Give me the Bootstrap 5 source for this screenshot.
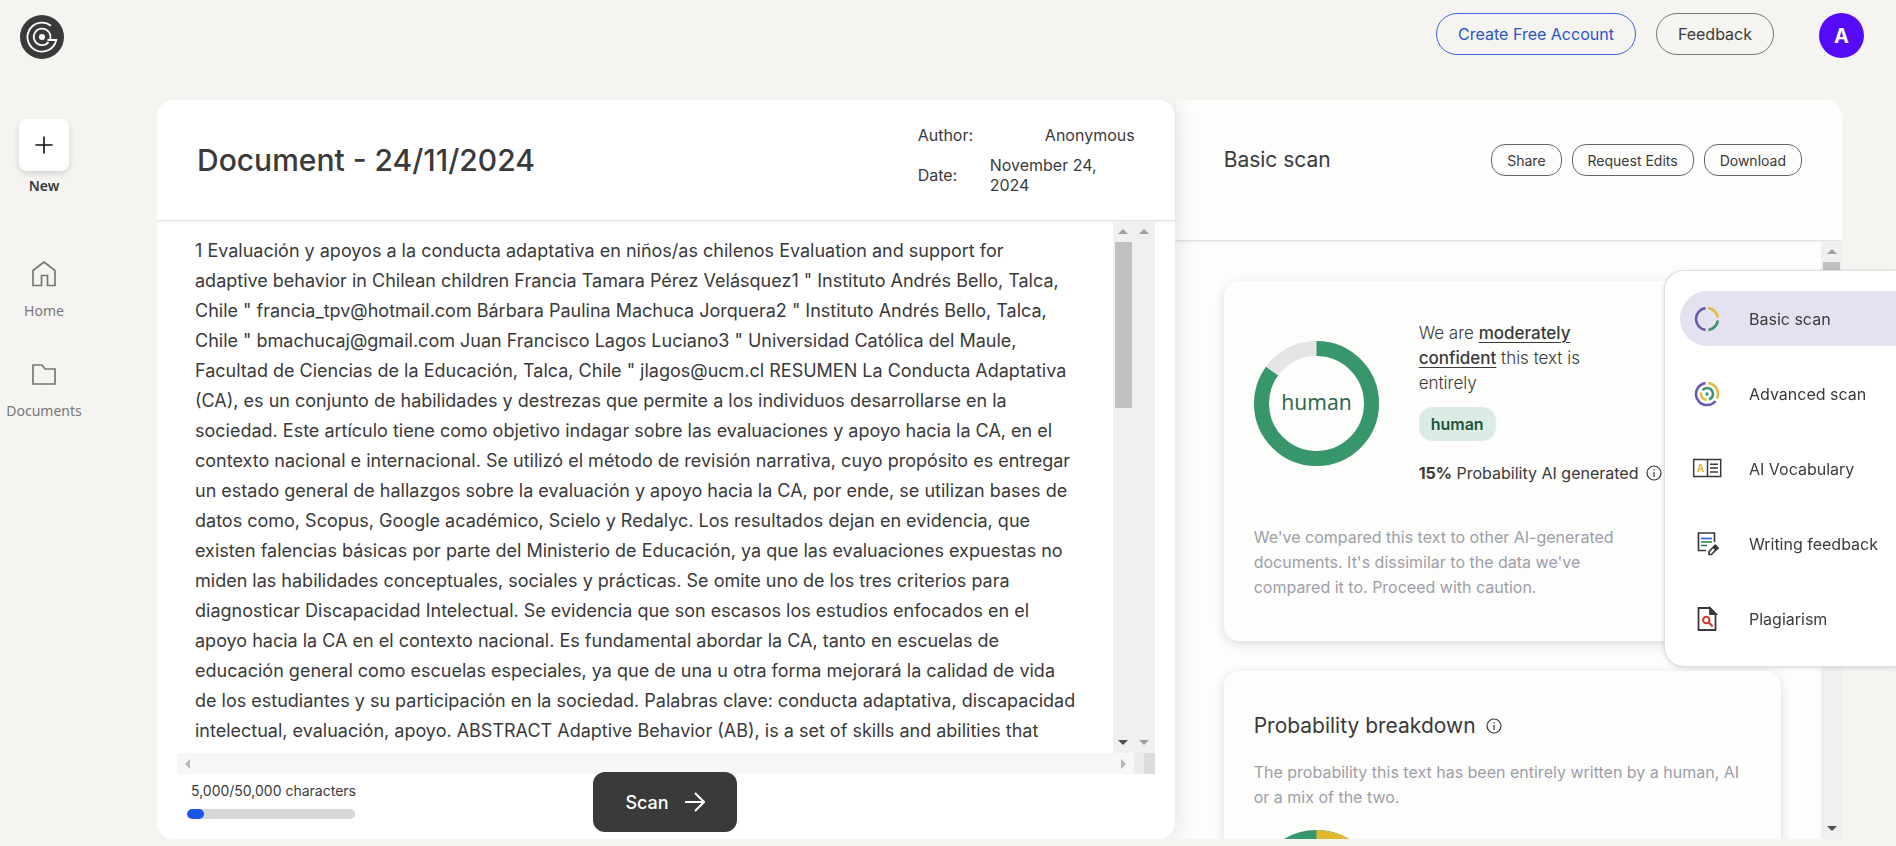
<!DOCTYPE html>
<html lang="en">
<head>
<meta charset="utf-8">
<meta name="viewport" content="width=device-width, initial-scale=1">
<title>Document scan</title>
<link href="https://cdn.jsdelivr.net/npm/bootstrap@5.3.0/dist/css/bootstrap.min.css" rel="stylesheet">
<style>
  :root { --ink: #3a3a3a; --paper: #fdfdfb; --page: #f5f4f1; --green: #38966b; --mute: #9d9da9; }
  body { background: var(--page); color: var(--ink); font-family: Inter, "Liberation Sans", sans-serif; font-size: 16px; height: 100vh; overflow: hidden; }
  svg { display: block; flex: none; }

  .topbar { height: 100px; padding: 13px 32px 0 20px; }
  .topbar .btn { height: 42px; border-radius: 21px; padding: 0 21px; font-size: 16px; border-color: #777; color: var(--ink); }
  .topbar .btn-account { border-color: #3e68d8; color: #2a56c6; }
  .avatar { width: 45px; height: 45px; margin-left: 21px; background: #560bf8; color: #fff; font-size: 20px; font-weight: 700; }

  .side { width: 88px; margin-right: 69px; padding-top: 19px; font-family: "Noto Sans", sans-serif; font-size: 14px; line-height: 20px; }
  .side a { color: #777; text-decoration: none; }
  .side .new-link { color: var(--ink); font-weight: 600; }
  .new-tile { width: 50px; height: 52px; border-radius: 8px; background: #fff; box-shadow: 0 3px 6px #0002; margin-bottom: 5px; }
  .side .nav-gap { margin-top: 65px; gap: 14px; }
  .side .nav-gap-sm { margin-top: 42px; gap: 14px; }

  .workspace { margin: 0 54px 7px 0; background: var(--paper); border-radius: 16px 16px 0 0; overflow: hidden; }
  .doc-pane { flex: 61 1 0; background: #fff; border-radius: 16px; box-shadow: 0 0 24px #0002; z-index: 1; min-width: 0; }
  .scan-pane { flex: 40 1 0; min-width: 0; }
  .doc-head { height: 121px; padding: 0 40px; border-bottom: 1px solid #e2e2e2; box-shadow: 0 1px 3px #0001; flex: none; }
  .doc-head h1 { font-size: 30px; font-weight: 500; }
  .meta { width: 217px; font-size: 16px; line-height: 20px; }
  .meta .when { width: 145px; }
  .doc-scroll { margin: 0 20px; }
  .doc-text { padding: 15px 0 0 18px; font-size: 18px; line-height: 30px; white-space: nowrap; overflow: hidden; }

  .vbar { width: 21px; background: #f0f0f0; padding: 8px 2px; flex: none; }
  .hbar { height: 21px; background: #f7f7f7; flex: none; padding: 0 0 0 8px; }
  .hbar .corner-box { width: 21px; background: linear-gradient(90deg, #ececec 50%, #dcdcdc 50%); }
  .arrow { width: 0; height: 0; border: 5px solid transparent; }
  .arrow-up { border-top: 0; border-bottom-color: #a0a0a0; }
  .arrow-down { border-bottom: 0; border-top-color: #a0a0a0; }
  .arrow-left { border-left: 0; border-right-color: #b8b8b8; }
  .arrow-right { border-right: 0; border-left-color: #b8b8b8; }
  .arrow-dark { border-top-color: #505050; }
  .thumb { width: 17px; background: #c1c1c1; margin-top: 8px; }

  .doc-foot { height: 65px; flex: none; padding: 0 30px; }
  .quota { width: 168px; font-size: 14px; line-height: 18px; }
  .quota label { padding-left: 4px; white-space: nowrap; }
  .quota .progress { height: 10px; background: #d7d8da; border-radius: 5px; margin-top: 9px; }
  .quota .progress-bar { background: #1c55e8; border-radius: 5px; }
  .btn-scan, .btn-scan:hover { width: 144px; height: 60px; border-radius: 12px; background: var(--ink); color: #fff; font-size: 18px; font-weight: 500; margin: -2px auto 0 238px; }

  .scan-head { height: 141px; padding: 0 40px 20px 49px; border-bottom: 1px solid #e2e2e2; box-shadow: 0 1px 3px #0001; flex: none; }
  .scan-head h2, .panel h2 { font-size: 21px; font-weight: 400; line-height: 28px; margin: 0; }
  .scan-head .btn { height: 32px; border-radius: 14px; padding: 0 15px; font-size: 14px; border-color: #666; color: var(--ink); }
  .scan-list { padding: 40px 40px 0 49px; gap: 30px; overflow: hidden; }
  .panel { background: #fdfdfb; border-radius: 15px; box-shadow: 0 3px 12px #0002; padding: 30px; flex: none; }
  .panel-result { height: 360px; }
  .panel .note { color: var(--mute); font-size: 16px; line-height: 25px; margin: 0; }
  .verdict { font-size: 17px; line-height: 25px; font-weight: 300; padding-top: 10px; }
  .verdict strong { font-weight: 500; text-decoration: underline; text-underline-offset: 3px; }
  .tag { background: #dbece4; color: #1f5340; border-radius: 14px; height: 34px; padding: 0 12px; font-size: 16px; font-weight: 600; margin-top: 11px; }
  .donut-word { font-family: "Noto Sans", sans-serif; font-size: 21px; fill: #2d6a50; }
  .chance { font-size: 16px; line-height: 20px; white-space: nowrap; margin-top: 22px; }

  .tools { position: fixed; right: 0; top: 270px; width: 232px; height: 397px; background: #fff; border: 1px solid #dfdfe4; border-right: 0; border-radius: 20px 0 0 20px; box-shadow: 0 1px 4px #0002; padding: 20px 0 0 15px; gap: 20px; z-index: 2; }
  .tools a { height: 55px; border-radius: 28px 0 0 28px; padding-left: 12px; gap: 27px; color: var(--ink); text-decoration: none; font-size: 16px; white-space: nowrap; }
  .tools a.active { background: #e4e1f0; }
  .tools svg { overflow: visible; }
</style>
</head>
<body class="d-flex flex-column">
  <header class="topbar d-flex align-items-start flex-shrink-0">
    <a href="#" aria-label="Home page" class="me-auto" style="padding-top:2px">
      <svg width="44" height="44" viewBox="0 0 44 44" fill="none" stroke="#fff" stroke-width="1.800">
        <circle cx="22" cy="22" r="22" fill="#3a3a3a" stroke="none"/>
        <path d="M31 10.800A14.500 14.500 0 1 0 36.200 25H27.500"/>
        <path d="M28.500 27.200A8.300 8.300 0 1 1 30 24.500"/>
        <circle cx="22" cy="22" r="3" fill="#fff" stroke="none"/>
      </svg>
    </a>
    <div class="d-flex align-items-start">
      <button class="btn btn-account me-3" type="button">Create Free Account</button>
      <button class="btn ms-1 me-4" type="button">Feedback</button>
      <button class="avatar border-0 rounded-circle p-0" type="button">A</button>
    </div>
  </header>

  <div class="d-flex flex-fill" style="min-height:0">
    <nav class="side d-flex flex-column align-items-center flex-shrink-0">
      <a href="#" class="new-link d-flex flex-column align-items-center">
        <span class="new-tile d-flex align-items-center justify-content-center">
          <svg width="18" height="18" viewBox="0 0 18 18" stroke="#111" stroke-width="1.600"><path d="M9 .5v17M.5 9h17"/></svg>
        </span>New
      </a>
      <a href="#" class="nav-gap d-flex flex-column align-items-center">
        <svg width="24" height="26" viewBox="0 0 24 26" fill="none" stroke="#777" stroke-width="1.700"><path d="M1 24.500V9.500L12 1l11 8.500v15h-7.500v-10h-6v10z"/></svg>Home
      </a>
      <a href="#" class="nav-gap-sm d-flex flex-column align-items-center">
        <svg width="24" height="24" viewBox="0 0 24 24" fill="none" stroke="#777" stroke-width="1.700"><path d="M1 21V2h9l3 4h10v15z"/></svg>Documents
      </a>
    </nav>

    <main class="workspace d-flex flex-fill" style="min-width:0">
      <section class="doc-pane d-flex flex-column">
        <div class="doc-head d-flex align-items-center justify-content-between">
          <h1 class="m-0">Document - 24/11/2024</h1>
          <div class="meta d-flex flex-column" style="gap:10px">
            <div class="d-flex justify-content-between"><span>Author:</span><span>Anonymous</span></div>
            <div class="d-flex justify-content-between align-items-center"><span>Date:</span><span class="when">November 24,<br>2024</span></div>
          </div>
        </div>
        <div class="doc-scroll d-flex flex-fill" style="min-height:0">
          <div class="doc-text flex-fill">1 Evaluación y apoyos a la conducta adaptativa en niños/as chilenos Evaluation and support for<br>adaptive behavior in Chilean children Francia Tamara Pérez Velásquez1 " Instituto Andrés Bello, Talca,<br>Chile " francia_tpv@hotmail.com Bárbara Paulina Machuca Jorquera2 " Instituto Andrés Bello, Talca,<br>Chile " bmachucaj@gmail.com Juan Francisco Lagos Luciano3 " Universidad Católica del Maule,<br>Facultad de Ciencias de la Educación, Talca, Chile " jlagos@ucm.cl RESUMEN La Conducta Adaptativa<br>(CA), es un conjunto de habilidades y destrezas que permite a los individuos desarrollarse en la<br>sociedad. Este artículo tiene como objetivo indagar sobre las evaluaciones y apoyo hacia la CA, en el<br>contexto nacional e internacional. Se utilizó el método de revisión narrativa, cuyo propósito es entregar<br>un estado general de hallazgos sobre la evaluación y apoyo hacia la CA, por ende, se utilizan bases de<br>datos como, Scopus, Google académico, Scielo y Redalyc. Los resultados dejan en evidencia, que<br>existen falencias básicas por parte del Ministerio de Educación, ya que las evaluaciones expuestas no<br>miden las habilidades conceptuales, sociales y prácticas. Se omite uno de los tres criterios para<br>diagnosticar Discapacidad Intelectual. Se evidencia que son escasos los estudios enfocados en el<br>apoyo hacia la CA en el contexto nacional. Es fundamental abordar la CA, tanto en escuelas de<br>educación general como escuelas especiales, ya que de una u otra forma mejorará la calidad de vida<br>de los estudiantes y su participación en la sociedad. Palabras clave: conducta adaptativa, discapacidad<br>intelectual, evaluación, apoyo. ABSTRACT Adaptive Behavior (AB), is a set of skills and abilities that</div>
          <div class="vbar d-flex flex-column align-items-center"><span class="arrow arrow-up"></span><span class="thumb" style="height:166px"></span><span class="arrow arrow-down arrow-dark mt-auto"></span></div>
          <div class="vbar d-flex flex-column align-items-center justify-content-between"><span class="arrow arrow-up"></span><span class="arrow arrow-down"></span></div>
        </div>
        <div class="doc-scroll hbar d-flex align-items-center justify-content-between">
          <span class="arrow arrow-left me-auto"></span><span class="arrow arrow-right me-2"></span><span class="corner-box align-self-stretch"></span>
        </div>
        <div class="doc-foot d-flex align-items-start">
          <div class="quota pt-2"><label for="quota">5,000/50,000 characters</label>
            <div class="progress" id="quota" role="progressbar" aria-valuenow="10" aria-valuemin="0" aria-valuemax="100"><div class="progress-bar" style="width:10%"></div></div>
          </div>
          <button class="btn btn-scan d-flex align-items-center justify-content-center gap-3" type="button">Scan
            <svg width="20" height="20" viewBox="0 0 20 20" fill="none" stroke="#fff" stroke-width="2"><path d="M0 10h18M10 1l9 9-9 9"/></svg>
          </button>
        </div>
      </section>

      <section class="scan-pane d-flex flex-column">
        <div class="scan-head d-flex align-items-center justify-content-between">
          <h2>Basic scan</h2>
          <div class="d-flex" style="gap:10px">
            <button class="btn" type="button">Share</button>
            <button class="btn" type="button">Request Edits</button>
            <button class="btn" type="button">Download</button>
          </div>
        </div>
        <div class="d-flex flex-fill" style="min-height:0">
          <div class="scan-list d-flex flex-column flex-fill">
            <article class="panel panel-result">
              <div class="d-flex">
                <svg class="mt-4 me-3" width="125" height="137" viewBox="0 -6 125 137" fill="none" stroke-width="15">
                  <circle cx="62.500" cy="62.500" r="55" stroke="#e5e5e5"/>
                  <circle cx="62.500" cy="62.500" r="55" stroke="#38966b" pathLength="100" stroke-dasharray="85 15" transform="rotate(-90 62.500 62.500)"/>
                  <text class="donut-word" x="62.500" y="69" text-anchor="middle">human</text>
                </svg>
                <div class="ms-4">
                  <div class="verdict">We are <strong>moderately</strong><br><strong>confident</strong> this text is<br>entirely</div>
                  <span class="tag d-inline-flex align-items-center">human</span>
                  <div class="chance d-flex align-items-center"><span><b>15%</b> Probability AI generated</span>
                    <svg class="ms-2" width="16" height="16" viewBox="0 0 16 16" fill="none" stroke="#3a3a3a" stroke-width="1.200"><circle cx="8" cy="8" r="7"/><path d="M8 7v5M8 4.200v1.400"/></svg>
                  </div>
                </div>
              </div>
              <p class="note" style="margin-top:42px">We've compared this text to other AI-generated<br>documents. It's dissimilar to the data we've<br>compared it to. Proceed with caution.</p>
            </article>
            <article class="panel">
              <div class="d-flex align-items-center" style="margin:11px 0 20px"><h2>Probability breakdown</h2>
                <svg style="margin-left:10px" width="16" height="16" viewBox="0 0 16 16" fill="none" stroke="#3a3a3a" stroke-width="1.200"><circle cx="8" cy="8" r="7"/><path d="M8 7v5M8 4.200v1.400"/></svg>
              </div>
              <p class="note">The probability this text has been entirely written by a human, AI<br>or a mix of the two.</p>
              <svg style="margin-top:20px" width="125" height="125" viewBox="0 0 125 125" fill="none" stroke-width="15">
                <circle cx="62.500" cy="62.500" r="55" stroke="#38966b"/>
                <circle cx="62.500" cy="62.500" r="55" stroke="#e3b62f" pathLength="100" stroke-dasharray="15 85" transform="rotate(-90 62.500 62.500)"/>
              </svg>
            </article>
          </div>
          <div class="vbar d-flex flex-column align-items-center"><span class="arrow arrow-up"></span><span class="thumb" style="height:166px"></span><span class="arrow arrow-down arrow-dark mt-auto"></span></div>
        </div>
      </section>
    </main>
  </div>

  <nav class="tools d-flex flex-column">
    <a href="#" class="active d-flex align-items-center">
      <svg width="30" height="30" viewBox="-15 -15 30 30" fill="none" stroke-width="2.600"><path stroke="#6a5aad" d="M-1.500 -10.900A11 11 0 0 0 -1.500 10.900"/><path stroke="#e3b944" d="M1.500 -10.900A11 11 0 0 1 10.900 -1.500"/><path stroke="#3c9470" d="M10.900 1.500A11 11 0 0 1 1.500 10.900"/></svg>Basic scan</a>
    <a href="#" class="d-flex align-items-center">
      <svg width="30" height="30" viewBox="-15 -15 30 30" fill="none" stroke-width="2.600"><path stroke="#6a5aad" d="M-1.500 -10.900A11 11 0 1 0 8.500 7"/><path stroke="#e3b944" d="M1.500 -10.900A11 11 0 0 1 10 4.500"/><path stroke="#3c9470" d="M-4.500 -3.800A5.900 5.900 0 1 1 2 5.500"/><path stroke="#e3b944" d="M-5.800 -1.500A5.900 5.900 0 0 0 -.5 5.900"/><circle r="1.700" fill="#3c9470"/></svg>Advanced scan</a>
    <a href="#" class="d-flex align-items-center">
      <svg width="30" height="30" viewBox="-15 -15 30 30" fill="none" stroke="#3a3a3a" stroke-width="1.500"><path d="M-13.300 -9.500h27v17h-27zM.5 -9.500v17M3 -4.800h8M3 -1h8M3 2.900h8"/><text x="-6.500" y="3" text-anchor="middle" font-size="10" font-weight="700" fill="#e3b944" stroke="none">A</text></svg>AI Vocabulary</a>
    <a href="#" class="d-flex align-items-center">
      <svg width="30" height="30" viewBox="-15 -15 30 30" fill="none" stroke="#3a3a3a" stroke-width="1.700"><path d="M-1 6.500h-7.500v-17.500h16v9"/><path stroke="#2f62dc" d="M-6 -5.500h11"/><path stroke="#1f7a55" d="M-6 -2h11M-6 1.500h6"/><path d="M2 10.500v-3l6-6 2.500 2.500-6 6.500z"/><path d="M6.500 3.500l2.500 2.500 2-2-2.500-2.500z" fill="#3a3a3a"/></svg>Writing feedback</a>
    <a href="#" class="d-flex align-items-center">
      <svg width="30" height="30" viewBox="-15 -15 30 30" fill="none" stroke="#3a3a3a" stroke-width="1.800"><path d="M-8.500 -11h11l6 6v16h-17z"/><path d="M3 -11v6h6z" fill="#3a3a3a"/><g stroke="#d23a2c" stroke-width="2"><circle cx="-.7" cy="1" r="3.200"/><path d="M1.700 3.500l4 4"/></g></svg>Plagiarism</a>
  </nav>
<script src="https://cdn.jsdelivr.net/npm/bootstrap@5.3.0/dist/js/bootstrap.bundle.min.js"></script>
</body>
</html>
